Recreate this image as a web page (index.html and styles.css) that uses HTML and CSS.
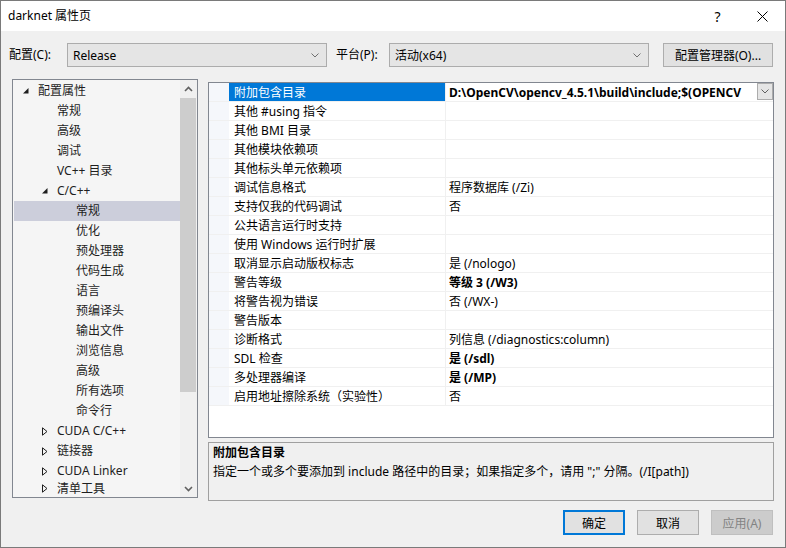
FILE: index.html
```html
<!DOCTYPE html>
<html lang="zh-CN">
<head>
  <meta charset="UTF-8">
  <title>darknet 属性页</title>
  <link rel="stylesheet" href="styles.css">
</head>
<body>
  <div class="window">
    <div class="titlebar">
      <span class="title">darknet 属性页</span>
      <span class="cap-btn help">?</span>
      <span class="cap-btn close">
        <svg width="11" height="11" viewBox="0 0 11 11"><path d="M0.5 0.5 L10.5 10.5 M10.5 0.5 L0.5 10.5" stroke="#000" stroke-width="1" fill="none"/></svg>
      </span>
    </div>

    <div class="toolbar">
      <span class="tb-label cfg">配置(C):</span>
      <div class="combo">
        <span>Release</span>
        <svg width="8" height="5" viewBox="0 0 8 5"><path d="M0.5 0.5 L4 4 L7.5 0.5" stroke="#707070" fill="none"/></svg>
      </div>
      <span class="tb-label plat">平台(P):</span>
      <div class="combo">
        <span>活动(x64)</span>
        <svg width="8" height="5" viewBox="0 0 8 5"><path d="M0.5 0.5 L4 4 L7.5 0.5" stroke="#707070" fill="none"/></svg>
      </div>
      <button class="btn cfg-mgr">配置管理器(O)...</button>
    </div>

    <div class="main">
      <div class="tree">
        <div class="tree-items">
          <div class="node lv0"><span class="tog"><svg width="6" height="6" viewBox="0 0 6 6"><path d="M5.5 0 L5.5 5.5 L0 5.5 Z" fill="#1e1e1e"/></svg></span>配置属性</div>
          <div class="node lv1"><span class="tog"></span>常规</div>
          <div class="node lv1"><span class="tog"></span>高级</div>
          <div class="node lv1"><span class="tog"></span>调试</div>
          <div class="node lv1"><span class="tog"></span>VC++ 目录</div>
          <div class="node lv1"><span class="tog"><svg width="6" height="6" viewBox="0 0 6 6"><path d="M5.5 0 L5.5 5.5 L0 5.5 Z" fill="#1e1e1e"/></svg></span>C/C++</div>
          <div class="node lv2 selected"><span class="tog"></span>常规</div>
          <div class="node lv2"><span class="tog"></span>优化</div>
          <div class="node lv2"><span class="tog"></span>预处理器</div>
          <div class="node lv2"><span class="tog"></span>代码生成</div>
          <div class="node lv2"><span class="tog"></span>语言</div>
          <div class="node lv2"><span class="tog"></span>预编译头</div>
          <div class="node lv2"><span class="tog"></span>输出文件</div>
          <div class="node lv2"><span class="tog"></span>浏览信息</div>
          <div class="node lv2"><span class="tog"></span>高级</div>
          <div class="node lv2"><span class="tog"></span>所有选项</div>
          <div class="node lv2"><span class="tog"></span>命令行</div>
          <div class="node lv1"><span class="tog"><svg width="6" height="9" viewBox="0 0 6 9"><path d="M0.5 0.8 L5 4.5 L0.5 8.2 Z" stroke="#1e1e1e" fill="none"/></svg></span>CUDA C/C++</div>
          <div class="node lv1"><span class="tog"><svg width="6" height="9" viewBox="0 0 6 9"><path d="M0.5 0.8 L5 4.5 L0.5 8.2 Z" stroke="#1e1e1e" fill="none"/></svg></span>链接器</div>
          <div class="node lv1"><span class="tog"><svg width="6" height="9" viewBox="0 0 6 9"><path d="M0.5 0.8 L5 4.5 L0.5 8.2 Z" stroke="#1e1e1e" fill="none"/></svg></span>CUDA Linker</div>
          <div class="node lv1 last"><span class="tog"><svg width="6" height="9" viewBox="0 0 6 9"><path d="M0.5 0.8 L5 4.5 L0.5 8.2 Z" stroke="#1e1e1e" fill="none"/></svg></span>清单工具</div>
        </div>
        <div class="vscroll">
          <div class="arrow">
            <svg width="9" height="6" viewBox="0 0 9 6"><path d="M1 5 L4.5 1.5 L8 5" stroke="#606060" stroke-width="1.6" fill="none"/></svg>
          </div>
          <div class="track"><div class="thumb"></div></div>
          <div class="arrow">
            <svg width="9" height="6" viewBox="0 0 9 6"><path d="M1 1 L4.5 4.5 L8 1" stroke="#606060" stroke-width="1.6" fill="none"/></svg>
          </div>
        </div>
      </div>

      <div class="right">
        <div class="grid">
          <div class="row active">
            <span class="gutter"></span>
            <span class="name">附加包含目录</span>
            <span class="val bold">
              <span class="val-text">D:\OpenCV\opencv_4.5.1\build\include;$(OPENCV</span>
              <span class="drop"><svg width="8" height="5" viewBox="0 0 8 5"><path d="M0.5 0.5 L4 4 L7.5 0.5" stroke="#606060" fill="none"/></svg></span>
            </span>
          </div>
          <div class="row"><span class="gutter"></span><span class="name">其他 #using 指令</span><span class="val"></span></div>
          <div class="row"><span class="gutter"></span><span class="name">其他 BMI 目录</span><span class="val"></span></div>
          <div class="row"><span class="gutter"></span><span class="name">其他模块依赖项</span><span class="val"></span></div>
          <div class="row"><span class="gutter"></span><span class="name">其他标头单元依赖项</span><span class="val"></span></div>
          <div class="row"><span class="gutter"></span><span class="name">调试信息格式</span><span class="val">程序数据库 (/Zi)</span></div>
          <div class="row"><span class="gutter"></span><span class="name">支持仅我的代码调试</span><span class="val">否</span></div>
          <div class="row"><span class="gutter"></span><span class="name">公共语言运行时支持</span><span class="val"></span></div>
          <div class="row"><span class="gutter"></span><span class="name">使用 Windows 运行时扩展</span><span class="val"></span></div>
          <div class="row"><span class="gutter"></span><span class="name">取消显示启动版权标志</span><span class="val">是 (/nologo)</span></div>
          <div class="row"><span class="gutter"></span><span class="name">警告等级</span><span class="val bold">等级 3 (/W3)</span></div>
          <div class="row"><span class="gutter"></span><span class="name">将警告视为错误</span><span class="val">否 (/WX-)</span></div>
          <div class="row"><span class="gutter"></span><span class="name">警告版本</span><span class="val"></span></div>
          <div class="row"><span class="gutter"></span><span class="name">诊断格式</span><span class="val">列信息 (/diagnostics:column)</span></div>
          <div class="row"><span class="gutter"></span><span class="name">SDL 检查</span><span class="val bold">是 (/sdl)</span></div>
          <div class="row"><span class="gutter"></span><span class="name">多处理器编译</span><span class="val bold">是 (/MP)</span></div>
          <div class="row"><span class="gutter"></span><span class="name">启用地址擦除系统（实验性）</span><span class="val">否</span></div>
        </div>
        <div class="desc">
          <div class="desc-title">附加包含目录</div>
          <div class="desc-text">指定一个或多个要添加到 include 路径中的目录；如果指定多个，请用 ";" 分隔。(/I[path])</div>
        </div>
      </div>
    </div>

    <div class="footer">
      <button class="btn default">确定</button>
      <button class="btn">取消</button>
      <button class="btn disabled">应用(A)</button>
    </div>
  </div>
</body>
</html>
```

FILE: styles.css
```css
html, body {
    margin: 0;
    padding: 0;
    background-color: #f0f0f0;
}

body {
    font-family: "Noto Sans", "Noto Sans CJK SC", sans-serif;
    font-size: 12px;
    color: #000;
}

.window {
    width: 786px;
    height: 548px;
    box-sizing: border-box;
    border: 1px solid #7a7a7a;
    background-color: #f0f0f0;
    display: flex;
    flex-direction: column;
}

/* title bar */
.titlebar {
    height: 30px;
    background-color: #ffffff;
    display: flex;
    align-items: center;
    padding-left: 7px;
}

.title {
    flex-grow: 1;
    line-height: 30px;
}

.cap-btn {
    width: 45px;
    height: 30px;
    display: flex;
    align-items: center;
    justify-content: center;
    font-size: 14px;
}

/* config row */
.toolbar {
    display: flex;
    align-items: center;
    padding: 12px 0 0 8px;
    height: 24px;
}

.tb-label {
    line-height: 24px;
}

.tb-label.cfg {
    width: 58px;
}

.tb-label.plat {
    width: 53px;
    margin-left: 9px;
}

.combo {
    width: 260px;
    height: 24px;
    box-sizing: border-box;
    border: 1px solid #acacac;
    background-color: #e5e5e5;
    display: flex;
    align-items: center;
    justify-content: space-between;
    padding: 0 7px 0 5px;
}

.btn {
    font-family: inherit;
    font-size: 12px;
    color: #000;
    height: 24px;
    box-sizing: border-box;
    border: 1px solid #adadad;
    background-color: #e1e1e1;
    padding: 0;
    margin: 0;
}

.cfg-mgr {
    width: 110px;
    margin-left: 14px;
}

/* main area */
.main {
    display: flex;
    margin-top: 12px;
    padding-left: 11px;
}

.tree {
    width: 186px;
    height: 419px;
    box-sizing: border-box;
    border: 1px solid #828790;
    background-color: #f5f5f5;
    display: flex;
}

.tree-items {
    flex-grow: 1;
    padding: 1px 0 0 1px;
    overflow: hidden;
}

.node {
    height: 20px;
    line-height: 20px;
    display: flex;
    align-items: center;
    color: #1e1e1e;
    white-space: nowrap;
}

.node.lv0 { padding-left: 6px; }
.node.lv1 { padding-left: 25px; }
.node.lv2 { padding-left: 44px; }

/* last row is half hidden by the panel edge */
.node.last {
    height: 15px;
    line-height: 15px;
    align-items: flex-end;
}

.node.selected {
    background-color: #cccedb;
}

.tog {
    width: 18px;
    height: 20px;
    display: flex;
    align-items: center;
    padding-left: 3px;
    box-sizing: border-box;
}

.node.last .tog {
    height: 15px;
}

.vscroll {
    width: 17px;
    flex-shrink: 0;
    background-color: #f0f0f0;
    display: flex;
    flex-direction: column;
}

.arrow {
    height: 17px;
    display: flex;
    align-items: center;
    justify-content: center;
}

.track {
    flex-grow: 1;
    padding-top: 1px;
}

.thumb {
    height: 294px;
    margin: 0 1px 0 0;
    background-color: #cdcdcd;
}

/* property grid */
.right {
    margin-left: 10px;
    width: 566px;
    padding-top: 3px;
}

.grid {
    height: 356px;
    box-sizing: border-box;
    border: 1px solid #828790;
    background-color: #ffffff;
    overflow: hidden;
}

.row {
    display: flex;
    height: 19px;
    box-sizing: border-box;
    border-bottom: 1px solid #f0f0f0;
}

.gutter {
    width: 20px;
    flex-shrink: 0;
    background-color: #f5f7fb;
}

.name {
    width: 216px;
    flex-shrink: 0;
    padding: 1px 0 0 5px;
    box-sizing: border-box;
    line-height: 17px;
    white-space: nowrap;
    overflow: hidden;
}

.row.active .name {
    background-color: #0078d7;
    color: #ffffff;
}

.val {
    flex-grow: 1;
    min-width: 0;
    display: flex;
    border-left: 1px solid #f0f0f0;
    padding: 1px 0 0 3px;
    line-height: 17px;
    white-space: nowrap;
    overflow: hidden;
}

.bold {
    font-weight: bold;
}

.val-text {
    flex-grow: 1;
    min-width: 0;
    overflow: hidden;
}

.row.active .val {
    padding-top: 0;
}

.row.active .val-text {
    padding-top: 1px;
}

.drop {
    width: 16px;
    height: 17px;
    box-sizing: border-box;
    border: 1px solid #acacac;
    background-color: #e5e5e5;
    display: flex;
    align-items: center;
    justify-content: center;
    flex-shrink: 0;
}

.desc {
    margin-top: 4px;
    height: 59px;
    box-sizing: border-box;
    border: 1px solid #a0a0a0;
    padding-left: 4px;
    line-height: 19px;
}

.desc-title {
    font-weight: bold;
}

/* buttons */
.footer {
    display: flex;
    justify-content: flex-end;
    gap: 12px;
    padding: 9px 12px 0 0;
}

.footer .btn {
    width: 62px;
    height: 25px;
}

.btn.default {
    border: 2px solid #0078d7;
}

.btn.disabled {
    background-color: #cccccc;
    border-color: #bfbfbf;
    color: #838383;
}
```
